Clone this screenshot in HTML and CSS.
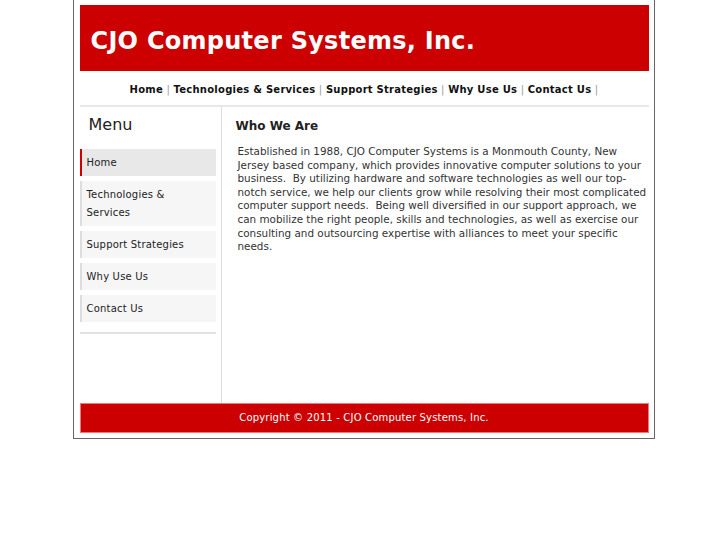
FILE: index.html
```html
<!DOCTYPE html>
<html lang="en">
<head>
    <meta charset="UTF-8">
    <title>CJO Computer Systems, Inc.</title>
    <link rel="stylesheet" href="styles.css">
</head>
<body>
    <div class="wrap">
        <div class="header">
            <h1>CJO Computer Systems, Inc.</h1>
        </div>
        <div class="nav">
            <a href="#">Home</a> <span class="sep">|</span>
            <a href="#">Technologies &amp; Services</a> <span class="sep">|</span>
            <a href="#">Support Strategies</a> <span class="sep">|</span>
            <a href="#">Why Use Us</a> <span class="sep">|</span>
            <a href="#">Contact Us</a> <span class="sep">|</span>
        </div>
        <div class="main">
            <div class="side">
                <h2>Menu</h2>
                <ul class="menu">
                    <li class="on"><a href="#">Home</a></li>
                    <li><a href="#">Technologies &amp; Services</a></li>
                    <li><a href="#">Support Strategies</a></li>
                    <li><a href="#">Why Use Us</a></li>
                    <li><a href="#">Contact Us</a></li>
                </ul>
                <div class="rule"></div>
            </div>
            <div class="content">
                <h3>Who We Are</h3>
                <p>
                    Established in 1988, CJO Computer Systems is a Monmouth County, New Jersey based company, which provides innovative computer solutions to your business.&nbsp; By utilizing hardware and software technologies as well our top-notch service, we help our clients grow while resolving their most complicated computer support needs.&nbsp; Being well diversified in our support approach, we can mobilize the right people, skills and technologies, as well as exercise our consulting and outsourcing expertise with alliances to meet your specific needs.
                </p>
            </div>
        </div>
        <div class="footer">
            Copyright &copy; 2011 - CJO Computer Systems, Inc.
        </div>
    </div>
</body>
</html>
```

FILE: styles.css
```css
body {
    margin: 0;
    font-family: 'DejaVu Sans', Verdana, sans-serif;
    background: #fff;
}
a {
    text-decoration: none;
}
.wrap {
    width: 569px;
    margin: 0 auto;
    padding: 5px 5px 5px 6px;
    border: 1px solid #666;
    border-top: none;
}
.header {
    background: #cc0000;
    height: 66px;
    box-sizing: border-box;
    padding: 6px 0 0 11px;
    display: flex;
    align-items: center;
}
.header h1 {
    margin: 0;
    color: #fff;
    font-size: 24px;
    letter-spacing: 0.27px;
    font-weight: bold;
}
.nav {
    height: 36px;
    box-sizing: border-box;
    padding-top: 3px;
    line-height: 31px;
    text-align: center;
    font-size: 10px;
    letter-spacing: 0.25px;
    border-bottom: 2px solid #e8e8e8;
}
.nav a {
    color: #111;
    font-weight: bold;
}
.nav .sep {
    color: #999;
}
.main {
    display: flex;
    min-height: 296px;
}
.side {
    width: 136px;
    padding-right: 5px;
    border-right: 1px solid #ddd;
}
.side h2 {
    margin: 0;
    padding: 8px 0 0 9px;
    height: 34px;
    box-sizing: border-box;
    font-size: 16px;
    font-weight: normal;
    color: #222;
}
.menu {
    list-style: none;
    margin: 8px 0 0;
    padding: 0;
}
.menu li {
    margin-bottom: 5px;
    padding: 5px 6px 4px 5px;
    line-height: 18px;
    font-size: 10px;
    letter-spacing: 0.2px;
    background: #f6f6f6;
    border-left: 2px solid #ddd;
}
.menu li.on {
    background: #e8e8e8;
    border-left-color: #cc0000;
}
.menu a {
    color: #222;
}
.rule {
    margin-top: 10px;
    border-top: 2px solid #e2e2e2;
}
.content {
    flex: 1;
    padding: 0 1px 0 14px;
}
.content h3 {
    margin: 0;
    padding-top: 12px;
    font-size: 12px;
    color: #222;
}
.content p {
    margin: 12px 0 0 2px;
    font-size: 10.4px;
    line-height: 13.6px;
    color: #333;
}
.footer {
    height: 28px;
    line-height: 28px;
    background: #cc0000;
    border: 1px solid #ee7777;
    color: #fff;
    font-size: 10px;
    letter-spacing: 0.18px;
    text-align: center;
}
```
